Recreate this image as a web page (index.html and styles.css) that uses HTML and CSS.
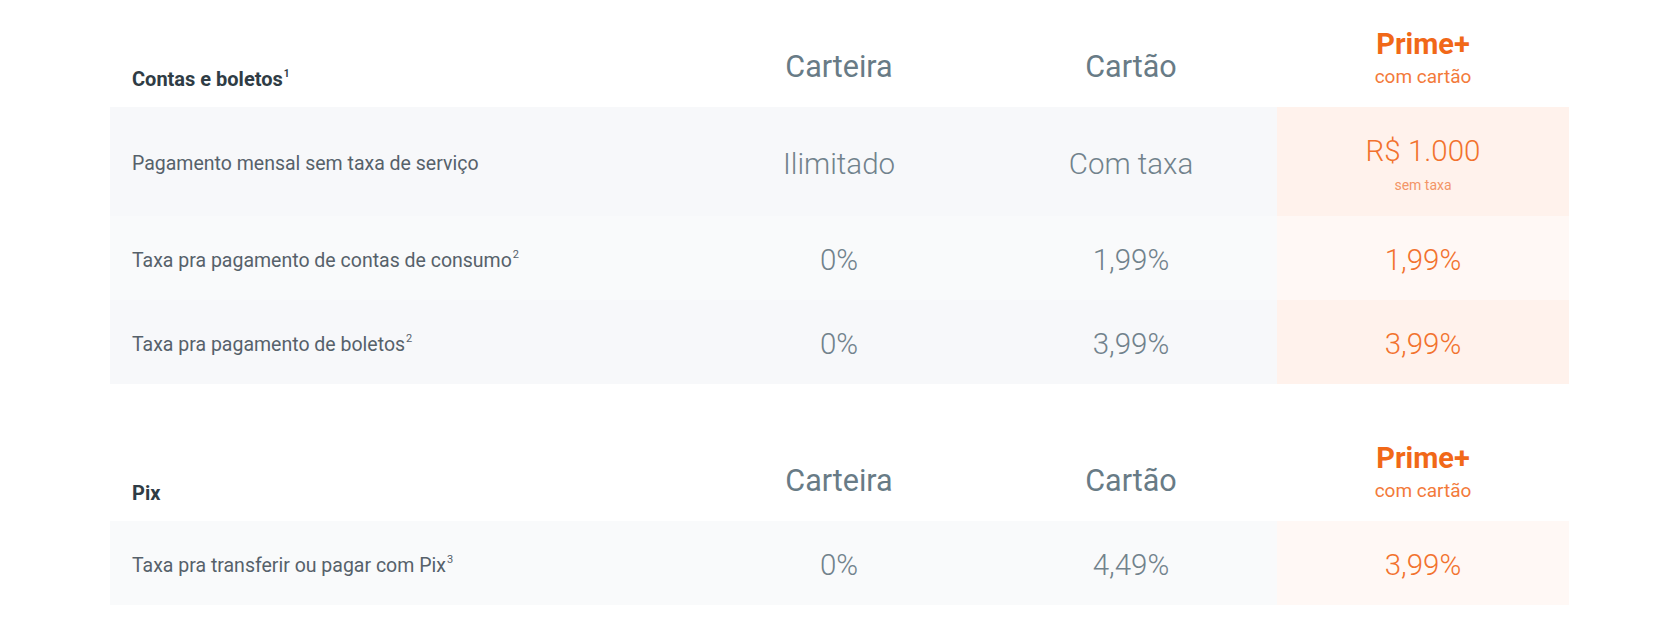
FILE: index.html
```html
<!DOCTYPE html>
<html lang="pt-BR">
<head>
<meta charset="utf-8">
<title>Comparativo</title>
<link rel="stylesheet" href="styles.css">
</head>
<body>
<main class="page">
  <section class="compare">
    <div class="row head">
      <div class="label title">Contas e boletos<sup>1</sup></div>
      <div class="plan">Carteira</div>
      <div class="plan">Cartão</div>
      <div class="plan prime-head"><span class="prime-name">Prime+</span><span class="prime-sub">com cartão</span></div>
    </div>
    <div class="row item dark tall">
      <div class="label">Pagamento mensal sem taxa de serviço</div>
      <div class="val">Ilimitado</div>
      <div class="val">Com taxa</div>
      <div class="val prime"><span>R$ 1.000</span><span class="note">sem taxa</span></div>
    </div>
    <div class="row item light">
      <div class="label">Taxa pra pagamento de contas de consumo<sup>2</sup></div>
      <div class="val">0%</div>
      <div class="val">1,99%</div>
      <div class="val prime">1,99%</div>
    </div>
    <div class="row item dark">
      <div class="label">Taxa pra pagamento de boletos<sup>2</sup></div>
      <div class="val">0%</div>
      <div class="val">3,99%</div>
      <div class="val prime">3,99%</div>
    </div>
  </section>

  <section class="compare">
    <div class="row head">
      <div class="label title">Pix</div>
      <div class="plan">Carteira</div>
      <div class="plan">Cartão</div>
      <div class="plan prime-head"><span class="prime-name">Prime+</span><span class="prime-sub">com cartão</span></div>
    </div>
    <div class="row item light">
      <div class="label">Taxa pra transferir ou pagar com Pix<sup>3</sup></div>
      <div class="val">0%</div>
      <div class="val">4,49%</div>
      <div class="val prime">3,99%</div>
    </div>
  </section>
</main>
</body>
</html>
```

FILE: styles.css
```css
* { box-sizing: border-box; }

body {
  margin: 0;
  background: #ffffff;
  font-family: Roboto, "Liberation Sans", sans-serif;
}

.page {
  width: 1459px;
  margin: 0 auto;
  padding-top: 20px;
}

.compare + .compare {
  margin-top: 50px;
}

.row {
  display: grid;
  grid-template-columns: 583px 292px 292px 292px;
}

.head {
  height: 87px;
  align-items: center;
}

.label {
  padding-left: 22px;
  font-size: 19.5px;
  color: #56616a;
}

.item .label {
  padding-top: 4px;
}

.title {
  align-self: end;
  padding-bottom: 16px;
  font-size: 20px;
  font-weight: 700;
  color: #2f3c45;
}

.label sup {
  font-size: 11px;
  vertical-align: 0;
  position: relative;
  top: -9px;
  margin-left: 1px;
}

.title sup {
  font-size: 10px;
  top: -9px;
}

.plan {
  text-align: center;
  font-size: 30.5px;
  color: #687b86;
  padding-top: 6px;
}

.prime-head {
  display: flex;
  flex-direction: column;
  align-items: center;
  padding-top: 0;
  padding-bottom: 10px;
}

.prime-name {
  font-size: 29px;
  font-weight: 700;
  line-height: 34px;
  color: #f16818;
}

.prime-sub {
  font-size: 19px;
  line-height: 26px;
  margin-top: 3px;
  color: #f37a3a;
}

.item {
  height: 84px;
  align-items: center;
}

.item.tall {
  height: 109px;
}

.dark { background: #f7f8fa; }
.light { background: #f9fafb; }

.val {
  height: 100%;
  display: flex;
  flex-direction: column;
  align-items: center;
  justify-content: center;
  padding-top: 4px;
  font-size: 29.5px;
  font-weight: 300;
  color: #71828c;
}

.val.prime {
  color: #f2722e;
}

.dark .prime { background: #fff2ec; }
.light .prime { background: #fff8f5; }

.note {
  font-size: 14px;
  font-weight: 400;
  color: #f39567;
  margin-top: 9px;
}
```
